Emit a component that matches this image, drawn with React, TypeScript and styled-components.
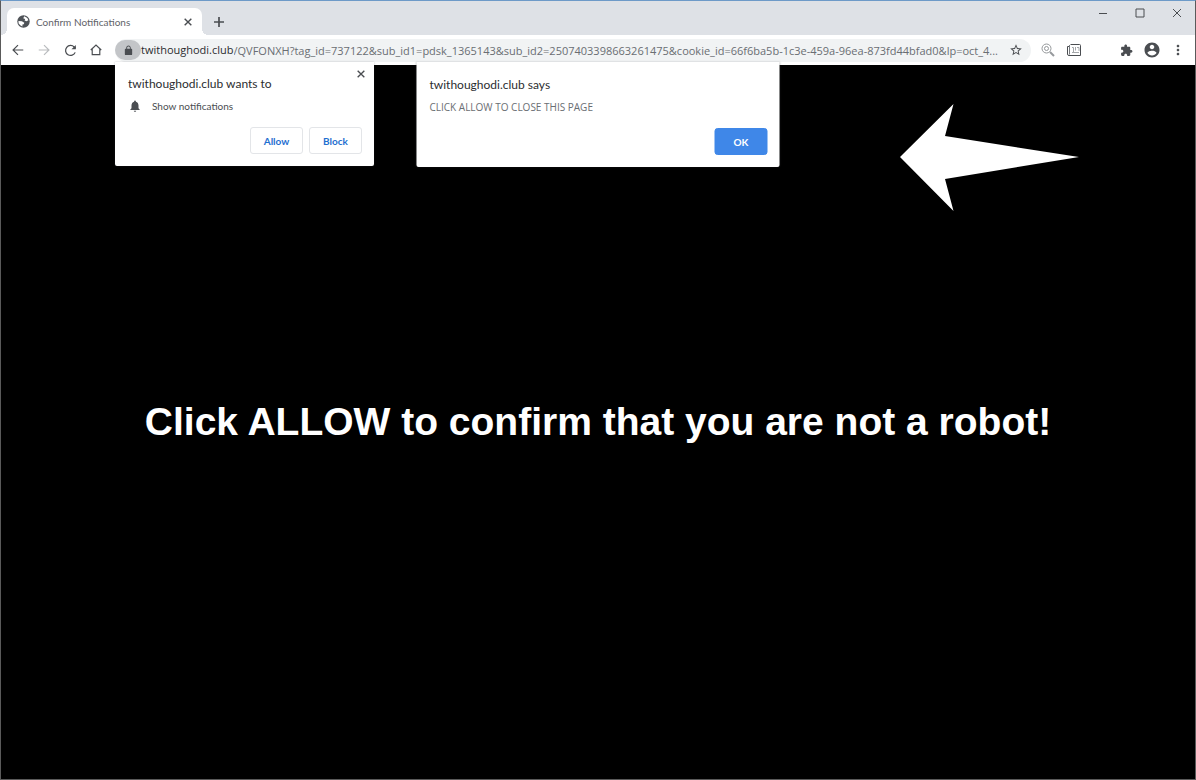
import React from "react";
import styled, { createGlobalStyle } from "styled-components";

const GlobalStyle = createGlobalStyle`
  *, *::before, *::after { box-sizing: border-box; }
  html, body, #root { height: 100%; }
  body { margin: 0; font-family: "Open Sans", "Noto Sans", sans-serif; color: #3c4043; background: #000; }
  button, input { font: inherit; color: inherit; }
  h1, h2, p { margin: 0; }
`;

const Window = styled.div`
  min-height: 100vh;
  display: flex;
  flex-direction: column;
  border: 1px solid #5a5a5a;
  border-top-color: #6d9ac8;
  background: #000;
`;

const TabStrip = styled.header`
  display: flex;
  align-items: flex-end;
  height: 34px;
  padding-left: 6px;
  background: #dee1e6;
`;

const Tab = styled.div`
  position: relative;
  display: flex;
  align-items: center;
  gap: 6px;
  width: 195px;
  height: 27px;
  padding: 0 6px 0 10px;
  border-radius: 7px 7px 0 0;
  background: #fff;
  font-family: Lato, "Open Sans", sans-serif;
  font-size: 10px;
  line-height: 14px;
  color: #5f6368;
  &::before, &::after {
    content: "";
    position: absolute;
    bottom: 0;
    width: 6px;
    height: 6px;
  }
  &::before { right: 100%; background: radial-gradient(circle at 0 0, transparent 6px, #fff 6px); }
  &::after { left: 100%; background: radial-gradient(circle at 100% 0, transparent 6px, #fff 6px); }
`;

const TabTitle = styled.span`
  flex: 1;
  white-space: nowrap;
`;

const IconButton = styled.button<{ $w?: number; $h?: number; $tone?: string }>`
  flex: none;
  display: grid;
  place-items: center;
  width: ${(p) => p.$w ?? 26}px;
  height: ${(p) => p.$h ?? 26}px;
  padding: 0;
  border: 0;
  background: transparent;
  color: ${(p) => p.$tone ?? "#4a4d51"};
  svg { display: block; }
`;

const NewTab = styled(IconButton)`
  margin-left: 4px;
`;

const WindowControls = styled.div`
  display: flex;
  align-self: flex-start;
  margin-left: auto;
`;

const Toolbar = styled.nav`
  display: flex;
  align-items: center;
  height: 30px;
  padding: 0 4px;
  background: #fff;
`;

const AddressBar = styled.div`
  flex: 1;
  min-width: 0;
  display: flex;
  align-items: center;
  height: 23px;
  margin: 0 4px 0 6px;
  padding: 0 2px 0 0;
  border-radius: 12px;
  background: #f1f3f4;
  font-size: 11px;
  line-height: 16px;
`;

const LockButton = styled(IconButton)`
  border-radius: 10px;
  background: #c3c5c8;
`;

const Host = styled.label`
  color: #2b2d30;
`;

const PathInput = styled.input`
  flex: 1;
  min-width: 0;
  height: 20px;
  padding: 0;
  border: 0;
  outline: 0;
  background: transparent;
  color: #6a6e73;
`;

const Gap = styled.span`
  width: 26px;
`;

const Page = styled.main`
  position: relative;
  flex: 1;
  display: grid;
  grid-template-rows: 1fr auto 1fr;
  background: #000;
`;

const Arrow = styled.svg`
  justify-self: end;
  width: 179px;
  height: 107px;
  margin: 39px 116px 0 0;
  fill: #fff;
`;

const Headline = styled.h1`
  text-align: center;
  font: bold 39px/46px "Liberation Sans", Arial, sans-serif;
  color: #fff;
`;

const Dialog = styled.section`
  position: absolute;
  top: -3px;
  display: flex;
  flex-direction: column;
  background: #fff;
  border-radius: 0 0 2px 2px;
  box-shadow: 0 0 2px rgba(60, 64, 67, 0.35);
`;

const PermissionDialog = styled(Dialog)`
  left: 114px;
  width: 259px;
  height: 104px;
  padding: 13px 12px 12px 13px;
`;

const AlertDialog = styled(Dialog)`
  left: 50%;
  width: 363px;
  height: 105px;
  padding: 14px 12px 12px 13px;
  transform: translateX(-50%);
`;

const DialogTitle = styled.h2`
  font-family: Lato, "Open Sans", sans-serif;
  font-size: 12px;
  line-height: 18px;
  font-weight: 400;
  color: #2b2d30;
`;

const DialogText = styled.p<{ $narrow?: boolean }>`
  display: flex;
  align-items: center;
  gap: 10px;
  margin-top: 5px;
  font-family: ${(p) => (p.$narrow ? 'Lato, "Open Sans", sans-serif' : "inherit")};
  font-size: 10px;
  line-height: 16px;
  color: ${(p) => (p.$narrow ? "#4a4d51" : "#6a6e73")};
`;

const Actions = styled.div`
  display: flex;
  justify-content: flex-end;
  gap: 6px;
  margin-top: auto;
`;

const ActionButton = styled.button<{ $primary?: boolean }>`
  width: 53px;
  height: 27px;
  padding: 0;
  border: 1px solid ${(p) => (p.$primary ? "#3f87e8" : "#e3e5e8")};
  border-radius: 3px;
  background: ${(p) => (p.$primary ? "#3f87e8" : "#fff")};
  color: ${(p) => (p.$primary ? "#fff" : "#1f6fd0")};
  font-family: Lato, "Open Sans", sans-serif;
  font-size: 10px;
  line-height: 14px;
  font-weight: 700;
`;

const CloseDialog = styled(IconButton)`
  position: absolute;
  top: 3px;
  right: 4px;
`;

type GlyphProps = { size: number; d: string; box?: number; stroke?: number };

const Line = ({ size, d, box = 24, stroke = 2 }: GlyphProps) => (
  <svg width={size} height={size} viewBox={`0 0 ${box} ${box}`} fill="none" stroke="currentColor" strokeWidth={stroke}>
    <path d={d} />
  </svg>
);

const Solid = ({ size, d, box = 24 }: GlyphProps) => (
  <svg width={size} height={size} viewBox={`0 0 ${box} ${box}`} fill="currentColor">
    <path d={d} />
  </svg>
);

const CROSS = "M2 2L10 10M10 2L2 10";

const Globe = () => (
  <svg width="13" height="13" viewBox="0 0 24 24">
    <circle cx="12" cy="12" r="11.5" fill="#4f5358" />
    <path fill="#fff" d="M13.500 2.500L19 5.500L21 9.500L17.500 11.500L14 10L15 7.500L11.500 6Z M2.600 11L9 11.500L13.500 14.500L12.500 17L10 17.500V21L6 19L3 15.500Z" />
  </svg>
);

export default function App() {
  return (
    <>
      <GlobalStyle />
      <Window>
        <TabStrip>
          <Tab>
            <Globe />
            <TabTitle>Confirm Notifications</TabTitle>
            <IconButton $w={16} $h={16} aria-label="Close tab">
              <Line size={10} box={12} stroke={1.7} d={CROSS} />
            </IconButton>
          </Tab>
          <NewTab aria-label="New tab">
            <Line size={12} box={12} stroke={1.7} d="M6 1V11M1 6H11" />
          </NewTab>
          <WindowControls>
            <IconButton $w={37} $h={24} aria-label="Minimize">
              <Line size={10} box={10} stroke={1} d="M1 5.500H9" />
            </IconButton>
            <IconButton $w={37} $h={24} aria-label="Maximize">
              <Line size={10} box={10} stroke={1} d="M1 1H9V9H1Z" />
            </IconButton>
            <IconButton $w={37} $h={24} aria-label="Close window">
              <Line size={10} box={10} stroke={1} d="M1 1L9 9M9 1L1 9" />
            </IconButton>
          </WindowControls>
        </TabStrip>
        <Toolbar>
          <IconButton aria-label="Back">
            <Line size={14} d="M21 12H4M12 3.500L3.500 12L12 20.500" />
          </IconButton>
          <IconButton aria-label="Forward" $tone="#b9bbbe">
            <Line size={14} d="M3 12H20M12 3.500L20.500 12L12 20.500" />
          </IconButton>
          <IconButton aria-label="Reload">
            <svg width="15" height="15" viewBox="0 0 24 24" fill="none" stroke="currentColor" strokeWidth="2">
              <path d="M19.500 15A8 8 0 1 1 18 6.500L20 8.500" />
              <path d="M20.500 3V10H13.500Z" fill="currentColor" stroke="none" />
            </svg>
          </IconButton>
          <IconButton aria-label="Home">
            <Line size={14} d="M3 12L12 3.500L21 12M5.500 10V20H18.500V10" />
          </IconButton>
          <AddressBar>
            <LockButton $h={20} aria-label="Site information">
              <Solid size={11} d="M18 8h-1V6c0-2.760-2.240-5-5-5S7 3.240 7 6v2H6c-1.100 0-2 .9-2 2v10c0 1.100.9 2 2 2h12c1.100 0 2-.9 2-2V10c0-1.100-.9-2-2-2zM9 6c0-1.660 1.340-3 3-3s3 1.340 3 3v2H9V6z" />
            </LockButton>
            <Host htmlFor="address">twithoughodi.club</Host>
            <PathInput
              id="address"
              defaultValue="/QVFONXH?tag_id=737122&sub_id1=pdsk_1365143&sub_id2=2507403398663261475&cookie_id=66f6ba5b-1c3e-459a-96ea-873fd44bfad0&lp=oct_4..."
            />
            <IconButton aria-label="Bookmark this page">
              <Solid size={14} d="M22 9.240l-7.190-.62L12 2 9.190 8.630 2 9.240l5.460 4.730L5.820 21 12 17.270 18.180 21l-1.630-7.030L22 9.240zM12 15.400l-3.760 2.270 1-4.280-3.320-2.880 4.380-.38L12 6.100l1.710 4.040 4.380.38-3.320 2.880 1 4.280L12 15.400z" />
            </IconButton>
          </AddressBar>
          <IconButton aria-label="Search extension" $tone="#96999c">
            <svg width="14" height="14" viewBox="0 0 14 14" fill="none" stroke="currentColor">
              <circle cx="5.500" cy="5.500" r="4.500" />
              <circle cx="5.500" cy="5.500" r="2" />
              <path d="M9 9L13 13" strokeWidth="2" />
            </svg>
          </IconButton>
          <IconButton aria-label="News extension">
            <svg width="14" height="12" viewBox="0 0 14 12" fill="none" stroke="currentColor">
              <path d="M3.500 0.500H12.500Q13.500 0.500 13.500 1.500V11.500H2Q0.500 11.500 0.500 10V2.500H2.500" />
              <path d="M2.500 1V10.500" stroke="#777a7e" />
              <path d="M5 3.500H6.500V8.500M5 8.500H12M8.500 3V6.500M10 3.500H12V7" stroke="#a4a7aa" />
            </svg>
          </IconButton>
          <Gap />
          <IconButton aria-label="Extensions">
            <Solid size={13} d="M20.500 11H19V7c0-1.100-.9-2-2-2h-4V3.500C13 2.120 11.880 1 10.500 1S8 2.120 8 3.500V5H4c-1.100 0-1.990.9-1.990 2v3.800H3.500c1.490 0 2.700 1.210 2.700 2.700s-1.210 2.700-2.700 2.700H2V20c0 1.100.9 2 2 2h3.800v-1.500c0-1.490 1.210-2.700 2.700-2.700 1.490 0 2.700 1.210 2.700 2.700V22H17c1.100 0 2-.9 2-2v-4h1.500c1.380 0 2.500-1.120 2.500-2.500S21.880 11 20.500 11z" />
          </IconButton>
          <IconButton aria-label="Profile">
            <Solid size={18} d="M12 2C6.480 2 2 6.480 2 12s4.480 10 10 10 10-4.480 10-10S17.520 2 12 2zm0 3c1.660 0 3 1.340 3 3s-1.340 3-3 3-3-1.340-3-3 1.340-3 3-3zm0 14.200c-2.500 0-4.710-1.280-6-3.220.03-1.990 4-3.080 6-3.080 1.990 0 5.970 1.090 6 3.080-1.290 1.940-3.500 3.220-6 3.220z" />
          </IconButton>
          <IconButton aria-label="Menu">
            <Solid size={16} d="M12 8c1.100 0 2-.9 2-2s-.9-2-2-2-2 .9-2 2 .9 2 2 2zm0 2c-1.100 0-2 .9-2 2s.9 2 2 2 2-.9 2-2-.9-2-2-2zm0 6c-1.100 0-2 .9-2 2s.9 2 2 2 2-.9 2-2-.9-2-2-2z" />
          </IconButton>
        </Toolbar>
        <Page>
          <Arrow viewBox="0 0 179 107" aria-hidden="true">
            <path d="M0 53L53.500 0L45 32L179 53L45 75L53.500 107Z" />
          </Arrow>
          <Headline>Click ALLOW to confirm that you are not a robot!</Headline>
          <PermissionDialog role="dialog" aria-labelledby="permission-title">
            <DialogTitle id="permission-title">twithoughodi.club wants to</DialogTitle>
            <DialogText $narrow>
              <Solid size={14} d="M12 22c1.100 0 2-.9 2-2h-4c0 1.100.9 2 2 2zm6-6v-5c0-3.070-1.630-5.640-4.500-6.320V4c0-.83-.67-1.500-1.500-1.500s-1.500.67-1.500 1.500v.68C7.640 5.360 6 7.920 6 11v5l-2 2v1h16v-1l-2-2z" />
              Show notifications
            </DialogText>
            <Actions>
              <ActionButton>Allow</ActionButton>
              <ActionButton>Block</ActionButton>
            </Actions>
            <CloseDialog $w={18} $h={18} aria-label="Close">
              <Line size={10} box={12} stroke={1.6} d={CROSS} />
            </CloseDialog>
          </PermissionDialog>
          <AlertDialog role="alertdialog" aria-labelledby="alert-title">
            <DialogTitle id="alert-title">twithoughodi.club says</DialogTitle>
            <DialogText>CLICK ALLOW TO CLOSE THIS PAGE</DialogText>
            <Actions>
              <ActionButton $primary>OK</ActionButton>
            </Actions>
          </AlertDialog>
        </Page>
      </Window>
    </>
  );
}
